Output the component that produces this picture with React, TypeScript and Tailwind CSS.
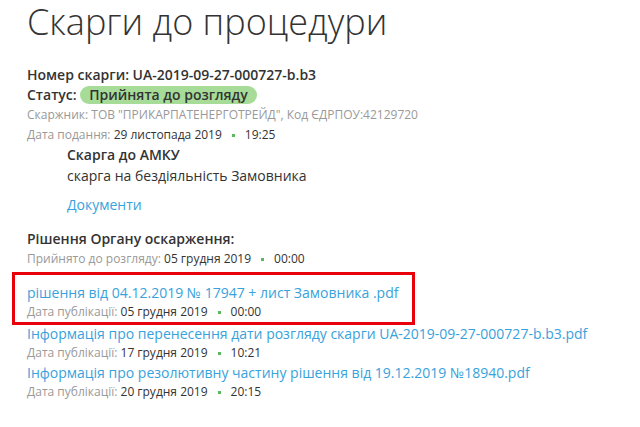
import React from "react";

const docs = [
  { title: "рішення від 04.12.2019 № 17947 + лист Замовника .pdf", date: "05 грудня 2019", time: "00:00", marked: true },
  { title: "Інформація про перенесення дати розгляду скарги UA-2019-09-27-000727-b.b3.pdf", date: "17 грудня 2019", time: "10:21" },
  { title: "Інформація про резолютивну частину рішення від 19.12.2019 №18940.pdf", date: "20 грудня 2019", time: "20:15" },
];

function DateLine({ label, date, time, tight }: { label: string; date: string; time: string; tight?: boolean }) {
  return (
    <div className={"flex items-center whitespace-pre text-[12px] text-[#333] " + (tight ? "leading-[18px]" : "leading-[20px]")}>
      <span className="text-[#999]">{label} </span>
      <span>{date}</span>
      <span className="mx-[10px] inline-block h-[3px] w-[3px] bg-[#5cb85c]" />
      <span>{time}</span>
    </div>
  );
}

export default function App() {
  return (
    <div className="min-h-screen bg-white pl-[27px] font-['Open_Sans',sans-serif] text-[#333]">
      <h1 className="pt-[1px] text-[36px] font-light leading-[42px] text-[#333]">Скарги до процедури</h1>

      <div className="mt-[22px] text-[14px] font-semibold leading-[20px]">
        Номер скарги: UA-2019-09-27-000727-b.b3
      </div>
      <div className="text-[14px] font-semibold leading-[20px]">
        Статус:{" "}
        <span className="inline-block rounded-full bg-[#a6dc98] px-[9px] leading-[18px]">Прийнята до розгляду</span>
      </div>
      <div className="text-[12px] leading-[20px] text-[#999]">
        Скаржник: ТОВ "ПРИКАРПАТЕНЕРГОТРЕЙД", Код ЄДРПОУ:42129720
      </div>
      <DateLine label="Дата подання:" date="29 листопада 2019" time="19:25" />

      <div className="pl-[40px]">
        <div className="text-[14px] font-semibold leading-[20px]">Скарга до АМКУ</div>
        <div className="text-[14px] leading-[22px]">скарга на бездіяльність Замовника</div>
        <a className="mt-[8px] block text-[14px] leading-[20px] text-[#38a2dc]">Документи</a>
      </div>

      <div className="mt-[14px] text-[14px] font-semibold leading-[20px]">Рішення Органу оскарження:</div>
      <DateLine label="Прийнято до розгляду:" date="05 грудня 2019" time="00:00" />

      <div className="mt-[3px]">
        {docs.map((d, i) =>
          d.marked ? (
            <div key={d.title} className="-ml-[15px] w-[403px] border-[3px] border-[#e8000b] pb-[1px] pl-[12px] pt-[8px]">
              <a className="block text-[14px] leading-[20px] text-[#38a2dc]">{d.title}</a>
              <DateLine label="Дата публікації:" date={d.date} time={d.time} tight />
            </div>
          ) : (
            <div key={d.title} className={i === 1 ? "-mt-[1px]" : "mt-[1px]"}>
              <a className="block text-[14px] leading-[20px] text-[#38a2dc]">{d.title}</a>
              <DateLine label="Дата публікації:" date={d.date} time={d.time} tight />
            </div>
          )
        )}
      </div>
    </div>
  );
}
